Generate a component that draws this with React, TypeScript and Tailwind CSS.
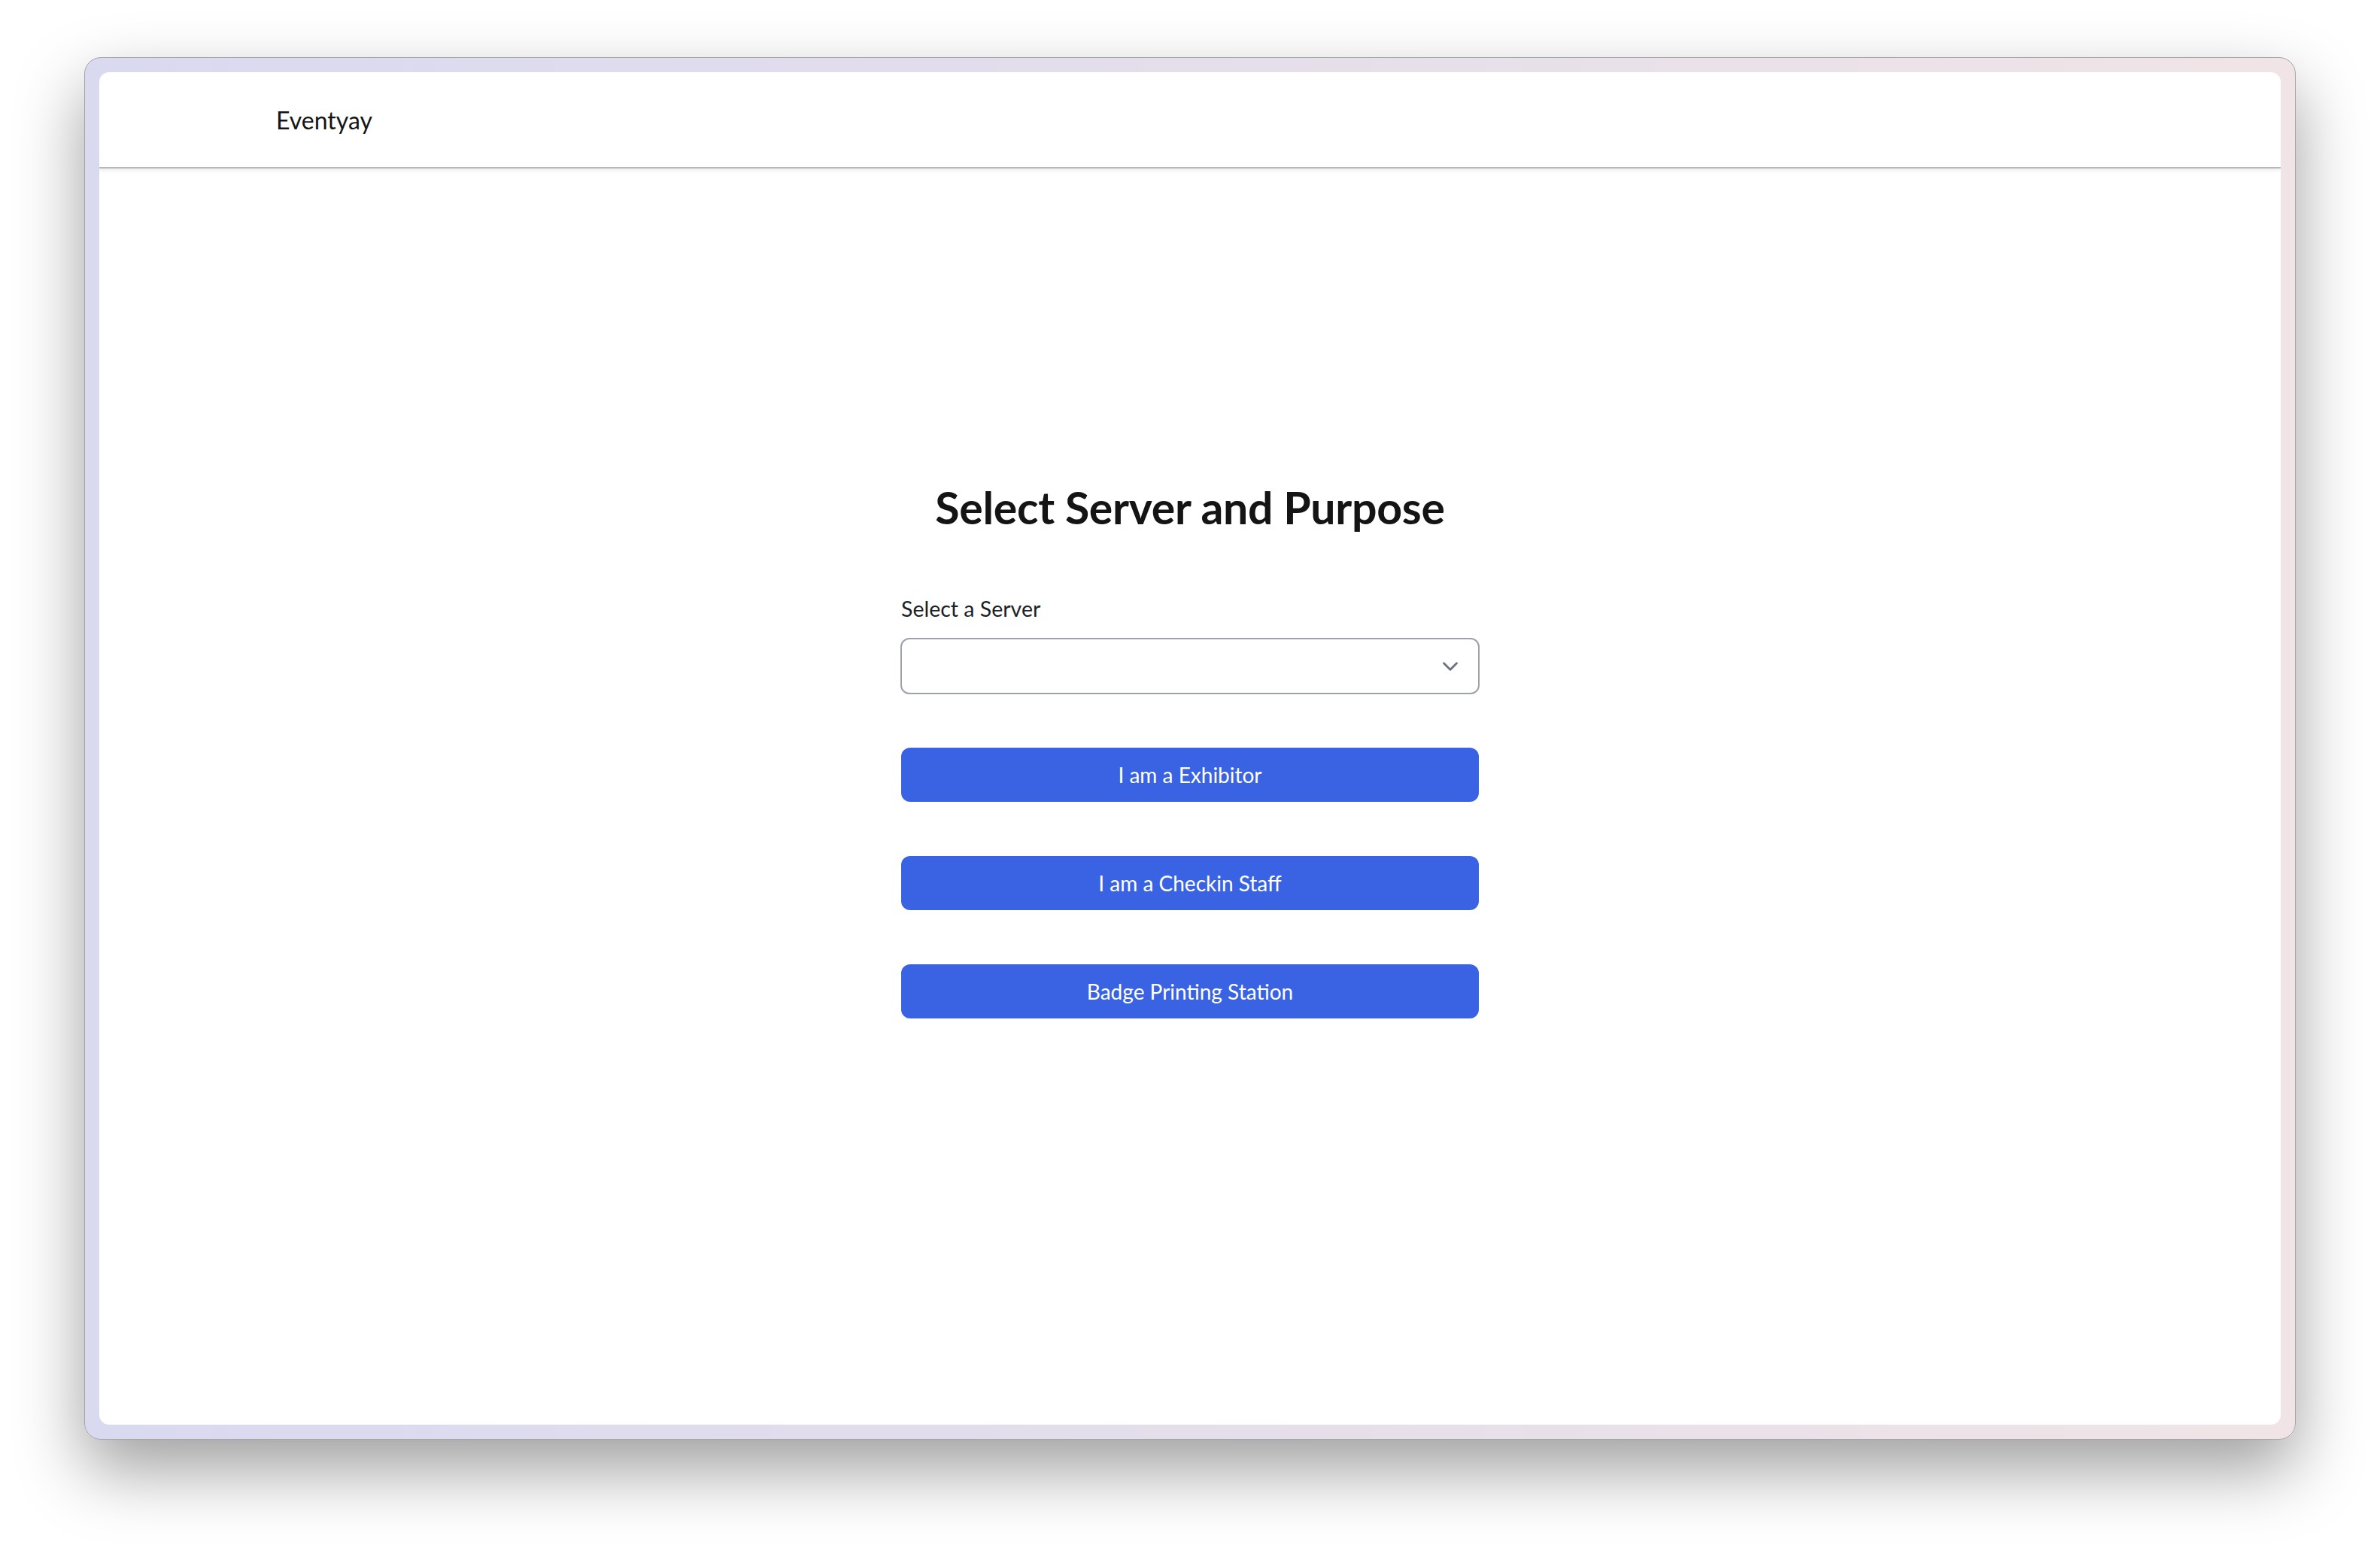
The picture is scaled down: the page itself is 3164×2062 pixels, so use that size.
import { ChevronDown } from "lucide-react";

const PURPOSES = ["I am a Exhibitor", "I am a Checkin Staff", "Badge Printing Station"];

export default function App() {
  return (
    <div
      className="w-[3164px] h-[2062px] bg-white pt-[76px] px-[112px]"
      style={{ fontFamily: "Lato, 'Noto Sans', sans-serif" }}
    >
      <div className="h-[1838px] rounded-[22px] border border-[#a3a3a8] bg-gradient-to-r from-[#d9d9f0] to-[#f0e4e6] p-[19px] shadow-[0_40px_90px_rgba(0,0,0,0.38)]">
        <div className="h-full rounded-[13px] bg-white flex flex-col overflow-hidden">
          <header className="h-[128px] shrink-0 flex items-center pl-[235px] border-b-2 border-[#b5b8bd] shadow-[0_3px_4px_rgba(0,0,0,0.07)]">
            <span className="text-[32px] text-[#151515] pt-[2px]">Eventyay</span>
          </header>

          <main className="flex-1 flex flex-col items-center pt-[413px]">
            <div className="w-[770px] flex flex-col">
              <h1 className="text-[59px] leading-[76px] font-bold text-[#141414] text-center tracking-[-0.3px]">
                Select Server and Purpose
              </h1>

              <label className="mt-[76px] text-[28.5px] leading-[40px] text-[#1c1f26] pl-[1px]">
                Select a Server
              </label>
              <div className="mt-[19px] h-[75px] rounded-[12px] border-2 border-[#9ca1ad] flex items-center justify-end pr-[20px]">
                <ChevronDown className="w-[34px] h-[34px] text-[#6b7280]" strokeWidth={2} />
              </div>

              <div className="mt-[71px] flex flex-col gap-[72px] px-[1px]">
                {PURPOSES.map((p) => (
                  <button
                    key={p}
                    className="h-[72px] rounded-[12px] bg-[#3a63e3] text-white text-[28px] flex items-center justify-center"
                  >
                    {p}
                  </button>
                ))}
              </div>
            </div>
          </main>
        </div>
      </div>
    </div>
  );
}
